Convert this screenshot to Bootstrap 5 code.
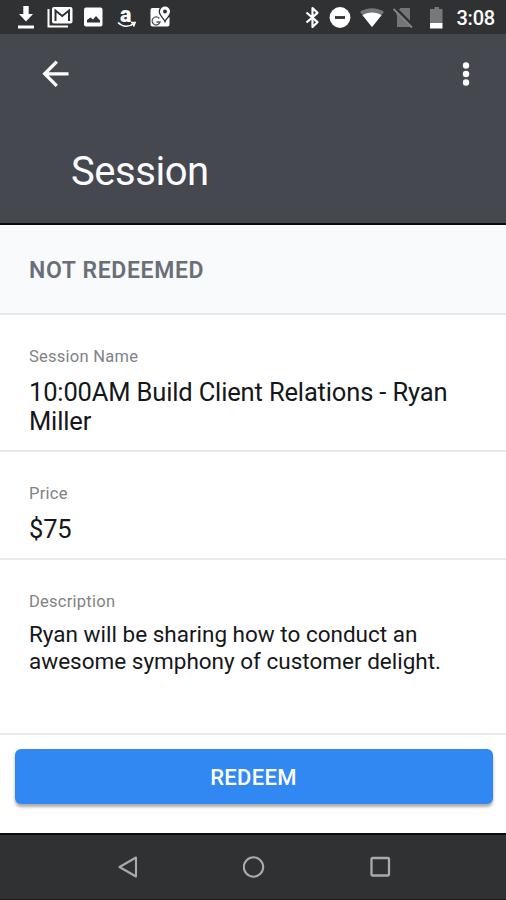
<!DOCTYPE html>
<html lang="en">
<head>
<meta charset="utf-8">
<meta name="viewport" content="width=device-width, initial-scale=1">
<title>Session</title>
<link href="https://cdn.jsdelivr.net/npm/bootstrap@5.3.0/dist/css/bootstrap.min.css" rel="stylesheet">
<style>
body{font-family:Roboto,"Liberation Sans",sans-serif;color:#15171a;height:900px;overflow:hidden}
svg{display:block;flex:none}
.sysbar{height:34px;background:#303132;padding:0 11px 0 14px}
.sys-left{gap:6.5px}
.sys-right{gap:4px}
.clock{font-size:20px;font-weight:500;line-height:34px;padding-top:2px;letter-spacing:-.2px}
.appbar{height:191px;background:#464850;border-bottom:2px solid #0b0b0d;color:#fbfcff}
.toolbar{height:79px;padding:0 24px 0 40px}
.page-title{font-size:40px;line-height:48px;font-weight:400;letter-spacing:-.45px;padding:35px 0 0 71px}
.state{height:90px;background:#f8fafc;border-bottom:2px solid #e6e8eb;padding:5px 29px 0;font-size:23px;font-weight:600;letter-spacing:.65px;color:#6a6f77}
.field{border-bottom:2px solid #e8eaec;padding:29px 29px 0}
.field-name{height:137px}
.field-price{height:108px}
.field-desc{height:175px}
.field dt{font-size:16.5px;line-height:25px;font-weight:400;color:#7f8287;letter-spacing:.25px}
.field dd{font-size:25.5px;line-height:29.500px;letter-spacing:-.15px;margin:8.500px 0 0}
.field-desc dd{font-size:22.5px;line-height:27px;letter-spacing:0;margin-top:7px}
.action{height:98px;padding:14px 13.5px 0 14.5px}
.btn-redeem{height:55px;border:0;border-radius:6px;background:#3188f2;color:#fff;font-size:22px;font-weight:500;letter-spacing:.3px;padding:2px 0 0;box-shadow:0 3px 3px rgba(60,50,40,.4)}
.softkeys{height:67px;background:#303132;border-top:2px solid #0b0b0b;border-bottom:1px solid #241a1e;gap:104px;padding-left:2px;color:#a9aaab}
</style>
</head>
<body class="d-flex flex-column bg-white">
<header>
  <div class="sysbar d-flex align-items-center justify-content-between text-white">
    <div class="sys-left d-flex align-items-center">
      <svg width="26" height="28" viewBox="0 0 26 28" fill="#fff"><path d="M9.300 3h5.400v8h4.300L12 18.500 5 11h4.300zM4 22.500h16v3H4z"/></svg>
      <svg width="26" height="28" viewBox="0 0 26 28"><path d="M1.500 6v17.500H21" fill="none" stroke="#fff" stroke-width="2"/><rect x="5" y="4" width="20.500" height="16.500" rx="2" fill="#fff"/><path d="M8.500 18V7.500L15.200 13 22 7.500V18" fill="none" stroke="#303132" stroke-width="2"/></svg>
      <svg width="28" height="28" viewBox="0 0 28 28"><rect x="5" y="4.500" width="18.500" height="19" rx="2" fill="#fff"/><path d="M8 19.500V17l3.500-2.500 2.500 2 3-3.500 4 4.500v2z" fill="#303132"/></svg>
      <svg width="26" height="28" viewBox="0 0 26 28"><text x="6" y="19" font-family="Roboto,sans-serif" font-size="21.500" font-weight="900" fill="#fff">a</text><path d="M4 19.500c5 4.800 11 4.800 16 .8M17 19.500h4l-1.500 4" fill="none" stroke="#fff" stroke-width="1.700"/></svg>
      <svg width="28" height="28" viewBox="0 0 28 28"><path d="M6.500 5h11l3 11 3-2v7.500a2 2 0 0 1-2 2h-15a2 2 0 0 1-2-2V7a2 2 0 0 1 2-2z" fill="#fff"/><path d="M13.300 15.500A4 4 0 1 0 14 19H10.500" fill="none" stroke="#55575a" stroke-width="1.300"/><path d="M19 18.500c-1-3-5.700-6-5.700-10a5.700 5.700 0 0 1 11.400 0c0 4-4.700 7-5.700 10z" fill="#fff" stroke="#303132" stroke-width="1.300"/><circle cx="19" cy="8.500" r="2" fill="#303132"/></svg>
    </div>
    <div class="sys-right d-flex align-items-center">
      <svg width="22" height="28" viewBox="-1 0 22 28"><path d="M5.500 9.500l11 9.700-5 4.800V5l5 4.800-11 9.700" fill="none" stroke="#fff" stroke-width="2.200" stroke-linejoin="round"/></svg>
      <svg width="22" height="28" viewBox="-2 0 22 28" overflow="visible"><circle cx="12" cy="14.500" r="10.400" fill="#fff"/><path d="M7 14.500h10" stroke="#303132" stroke-width="2.800"/></svg>
      <svg width="34" height="28" viewBox="-2.500 0 34 28"><path d="M5.500 9c6.500-5 17.500-5 24 0L17.500 24z" fill="#77787a"/><path d="M8 12.200c5.500-3.600 13.500-3.600 19 0L17.500 24z" fill="#fff"/></svg>
      <svg width="24" height="28" viewBox="-1.500 0 24 28"><path d="M4.500 9.500L9 5h9.500v19h-13V13z" fill="#747576"/><path d="M3 5l19 19" stroke="#303132" stroke-width="4"/><path d="M2 6l18.500 18.500" stroke="#858687" stroke-width="1.800"/></svg>
      <svg width="34" height="28" viewBox="-2.500 0 34 28"><path d="M11 6h3V4h4.500v2H22v14H9.500V6z" fill="#777879"/><path d="M9.500 20H22v5.500H9.500z" fill="#fff"/></svg>
      <span class="clock">3:08</span>
    </div>
  </div>
  <div class="appbar">
    <div class="toolbar d-flex align-items-center justify-content-between">
      <svg width="30" height="30" viewBox="0 0 30 30" role="img" aria-label="Back"><path d="M28.500 14.800H5M16.800 2.700L4.700 14.800l12.100 12.100" fill="none" stroke="#fff" stroke-width="3.300"/></svg>
      <svg width="32" height="30" viewBox="0 0 32 30" fill="#fff" role="img" aria-label="More"><circle cx="16" cy="6.500" r="3.200"/><circle cx="16" cy="15" r="3.200"/><circle cx="16" cy="23.500" r="3.200"/></svg>
    </div>
    <h1 class="page-title m-0">Session</h1>
  </div>
</header>
<main>
  <div class="state d-flex align-items-center">NOT REDEEMED</div>
  <dl class="m-0">
    <div class="field field-name"><dt>Session Name</dt><dd>10:00AM Build Client Relations - Ryan<br>Miller</dd></div>
    <div class="field field-price"><dt>Price</dt><dd>$75</dd></div>
    <div class="field field-desc"><dt>Description</dt><dd>Ryan will be sharing how to conduct an<br>awesome symphony of customer delight.</dd></div>
  </dl>
  <div class="action"><button type="button" class="btn btn-redeem w-100">REDEEM</button></div>
</main>
<nav class="softkeys d-flex justify-content-center align-items-center">
  <svg width="22" height="24" viewBox="0 0 22 24"><path d="M19 2.500v19L2.500 12z" fill="none" stroke="currentColor" stroke-width="2.100" stroke-linejoin="round"/></svg>
  <svg width="22" height="24" viewBox="0 0 22 24"><circle cx="10.500" cy="12" r="9.700" fill="none" stroke="currentColor" stroke-width="2.100"/></svg>
  <svg width="22" height="24" viewBox="-.5 0 22 24"><rect x="2" y="3" width="17.500" height="17.500" rx="1" fill="none" stroke="currentColor" stroke-width="2.300"/></svg>
</nav>
<script src="https://cdn.jsdelivr.net/npm/bootstrap@5.3.0/dist/js/bootstrap.bundle.min.js"></script>
</body>
</html>
